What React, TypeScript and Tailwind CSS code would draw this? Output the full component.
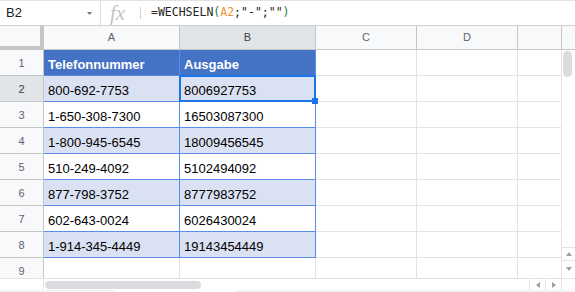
import React from 'react';

const rows: [string, string][] = [
  ['Telefonnummer', 'Ausgabe'],
  ['800-692-7753', '8006927753'],
  ['1-650-308-7300', '16503087300'],
  ['1-800-945-6545', '18009456545'],
  ['510-249-4092', '5102494092'],
  ['877-798-3752', '8777983752'],
  ['602-643-0024', '6026430024'],
  ['1-914-345-4449', '19143454449'],
  ['', ''],
];

const Tri: React.FC<{ dir: 'up' | 'down' | 'left' | 'right' }> = ({ dir }) => {
  const pts = {
    up: '0,4 3,0 6,4',
    down: '0,0 6,0 3,4',
    left: '4,0 4,6 0,3',
    right: '0,0 0,6 4,3',
  }[dir];
  const w = dir === 'up' || dir === 'down' ? 6 : 4;
  const h = dir === 'up' || dir === 'down' ? 4 : 6;
  return (
    <svg width={w} height={h} viewBox={`0 0 ${w} ${h}`}>
      <polygon points={pts} fill="#9aa0a6" />
    </svg>
  );
};

const FormulaBar = () => (
  <div className="h-[26px] shrink-0 flex items-stretch border-t border-b border-t-[#e3e3e3] border-b-[#d0d0d0]">
    {/* name box */}
    <div className="w-[101px] border-r border-[#e0e0e0] flex items-center justify-between pl-[6px] pr-[8px]">
      <span className="text-[13px] text-[#222]">B2</span>
      <svg width="5" height="3" viewBox="0 0 5 3">
        <polygon points="0,0 5,0 2.5,3" fill="#777" />
      </svg>
    </div>
    <div className="w-[39px] flex items-center pl-[9px]">
      <span className="font-['Liberation_Serif',serif] italic text-[21px] leading-none text-[#c4c4c4]">fx</span>
    </div>
    <div className="flex items-center">
      <div className="w-px h-[12px] bg-[#d0d0d0]" />
    </div>
    <div className="flex items-center pl-[10px] font-['DejaVu_Sans_Mono',monospace] text-[11.5px] text-[#222] whitespace-pre">
      <span>=WECHSELN</span>
      <span className="text-[#188038]">(</span>
      <span className="text-[#f09030]">A2</span>
      <span>;"-";""</span>
      <span className="text-[#188038]">)</span>
    </div>
  </div>
);

const HeaderRow = () => (
  <div className="grid grid-cols-[44px_136px_136px_101px_101px_44px] h-[24px] text-[11px] text-[#5f6368]">
    <div className="bg-[#f8f9fa] border-r-4 border-b-4 border-[#c4c7c5]" />
    <div className="bg-[#f8f9fa] border-r border-b border-[#c4c7c5] flex items-center justify-center">A</div>
    <div className="bg-[#e1e4e8] border-r border-b border-[#c4c7c5] flex items-center justify-center text-[#3c4043]">B</div>
    <div className="bg-[#f8f9fa] border-r border-b border-[#c4c7c5] flex items-center justify-center">C</div>
    <div className="bg-[#f8f9fa] border-r border-b border-[#c4c7c5] flex items-center justify-center">D</div>
    <div className="bg-[#f8f9fa] border-r border-b border-[#c4c7c5]" />
  </div>
);

const SheetRow: React.FC<{ n: number; a: string; b: string }> = ({ n, a, b }) => {
  const inTable = n <= 8;
  const head = n === 1;
  const band = inTable && n % 2 === 0;
  const fill = head
    ? 'bg-[#4472c4] text-white font-bold'
    : band
      ? 'bg-[#dae1f2] text-black'
      : 'bg-white text-black';
  const line = inTable ? 'border-[#5b8de8]' : 'border-[#e2e3e3]';
  const cell = 'flex items-center pt-1 pl-1 border-r border-b whitespace-nowrap overflow-visible';
  return (
    <div className="grid grid-cols-[44px_136px_136px_101px_101px_44px] h-[26px] text-[13px] leading-[15px]">
      <div
        className={`flex items-center justify-center pt-px border-r border-b border-[#c4c7c5] text-[11px] ${
          n === 2 ? 'bg-[#e1e4e8] text-[#3c4043]' : 'bg-[#f8f9fa] text-[#5f6368]'
        }`}
      >
        {n}
      </div>
      <div className={`${cell} ${fill} ${line}`}>{a}</div>
      <div className={`relative ${cell} ${fill} ${line}`}>
        {b}
        {n === 2 && (
          <>
            <div className="absolute -inset-px border-2 border-[#1a73e8] pointer-events-none" />
            <div className="absolute -right-[3px] -bottom-[3px] w-[6px] h-[6px] bg-[#1a73e8] z-10" />
          </>
        )}
      </div>
      <div className={`${cell} border-[#e2e3e3]`} />
      <div className={`${cell} border-[#e2e3e3]`} />
      <div className={`${cell} border-[#e2e3e3]`} />
    </div>
  );
};

const VScroll = () => (
  <div className="w-[13px] flex flex-col">
    <div className="h-[24px] bg-[#f8f9fa] border-b border-[#c4c7c5]" />
    <div className="h-[197px] pl-px pt-px">
      <div className="w-[9px] h-[26px] rounded-full bg-[#dadce0]" />
    </div>
    <div className="h-[13px] border-t border-[#e2e3e3] flex items-center justify-center">
      <Tri dir="up" />
    </div>
    <div className="h-[18px] border-t border-[#e2e3e3] flex items-center justify-center pb-[2px]">
      <Tri dir="down" />
    </div>
  </div>
);

const HScroll = () => (
  <div className="h-[12px] shrink-0 flex border-t border-[#e2e3e3]">
    <div className="w-[44px] border-r border-[#e2e3e3]" />
    <div className="w-[485px] pl-px flex items-center">
      <div className="w-[156px] h-[8px] rounded-full bg-[#dadce0]" />
    </div>
    <div className="w-[16px] border-l border-[#e2e3e3] flex items-center justify-center">
      <Tri dir="left" />
    </div>
    <div className="w-[16px] border-l border-[#e2e3e3] flex items-center justify-center">
      <Tri dir="right" />
    </div>
    <div className="w-[14px] border-l border-[#e2e3e3]" />
  </div>
);

export default function App() {
  return (
    <div className="w-[575px] h-[292px] overflow-hidden bg-white flex flex-col font-['Liberation_Sans',Arial,sans-serif]">
      <FormulaBar />
      <div className="flex h-[252px] shrink-0">
        <div className="w-[562px] overflow-hidden">
          <HeaderRow />
          {rows.map(([a, b], i) => (
            <SheetRow key={i} n={i + 1} a={a} b={b} />
          ))}
        </div>
        <VScroll />
      </div>
      <HScroll />
      {/* sheet tab bar, mostly cut off */}
      <div className="h-[2px] shrink-0 bg-[#f1f3f4] flex">
        <div className="ml-[115px] w-[122px] bg-white" />
      </div>
    </div>
  );
}
